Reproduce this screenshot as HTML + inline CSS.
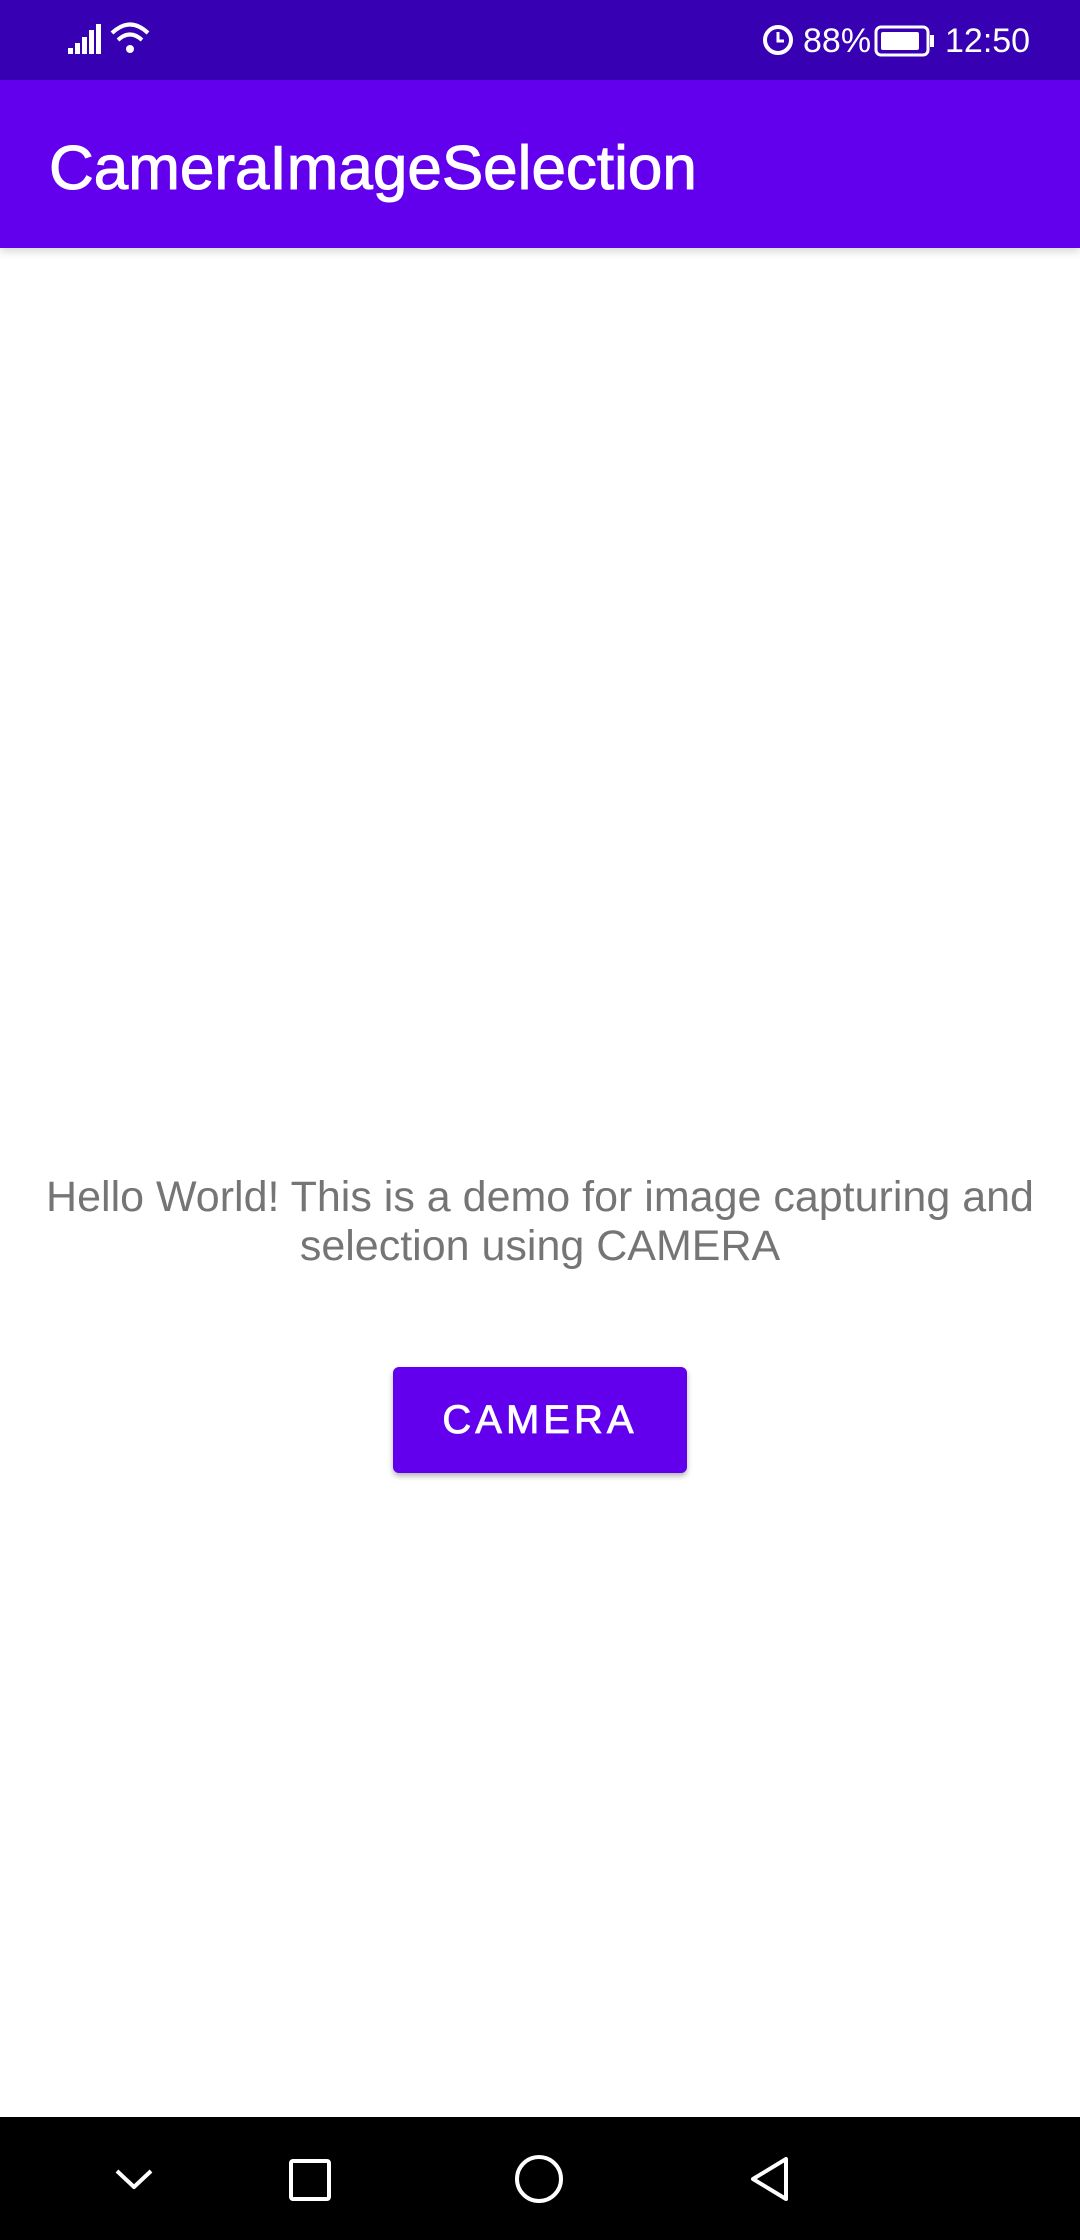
<!DOCTYPE html>
<html><head><meta charset="utf-8"><style>
html,body{margin:0;padding:0;width:1080px;height:2240px;background:#fff;overflow:hidden;font-family:"Liberation Sans",sans-serif;position:relative}
.sb{position:absolute;top:0;left:0;width:1080px;height:80px;background:#3700B3;color:#fff}
.ab{position:absolute;top:80px;left:0;width:1080px;height:168px;background:#6200EE;box-shadow:0 4px 8px rgba(0,0,0,.15)}
.ab span{position:absolute;left:49px;top:89px;color:#fff;font-size:62px;-webkit-text-stroke:1px #fff;line-height:1;transform:translateY(-50%)}
.msg{position:absolute;left:0;width:1080px;top:1173px;text-align:center;color:#757575;font-size:43px;line-height:49px}
.btn{position:absolute;left:393px;top:1367px;width:294px;height:106px;background:#6200EE;border-radius:6px;box-shadow:0 3px 6px rgba(0,0,0,.3);color:#fff;font-size:40px;-webkit-text-stroke:0.8px #fff;letter-spacing:4px;text-align:center;line-height:106px}
.nav{position:absolute;left:0;top:2117px;width:1080px;height:123px;background:#000}
</style></head><body>
<div class="sb">
<svg width="1080" height="80" style="position:absolute;left:0;top:0">
<g fill="#fff"><rect x="68" y="48" width="5" height="6"/><rect x="75" y="43" width="5" height="11"/><rect x="82" y="37" width="5" height="17"/><rect x="89" y="30" width="5" height="24"/><rect x="96" y="24" width="5" height="30"/></g>
<g fill="none" stroke="#fff" stroke-width="4"><path d="M112 33 Q130 16 148 33"/><path d="M118 40 Q130 29 142 40"/></g><circle cx="130" cy="49" r="4" fill="#fff"/>
<circle cx="778" cy="40" r="13" fill="none" stroke="#fff" stroke-width="4"/><path d="M778 32v9h6" stroke="#fff" stroke-width="3" fill="none"/>
<text x="803" y="52" fill="#fff" font-size="34" font-family="Liberation Sans">88%</text>
<rect x="876" y="27" width="52" height="28" rx="5" fill="none" stroke="#fff" stroke-width="3"/><rect x="881" y="32" width="38" height="18" rx="2" fill="#fff"/><rect x="930" y="35" width="4" height="12" fill="#fff"/>
<text x="945" y="52" fill="#fff" font-size="34" font-family="Liberation Sans">12:50</text>
</svg></div>
<div class="ab"><span>CameraImageSelection</span></div>
<div class="msg">Hello World! This is a demo for image capturing and<br>selection using CAMERA</div>
<div class="btn">CAMERA</div>
<div class="nav"><svg width="1080" height="123">
<g fill="none" stroke="#fff" stroke-width="4" stroke-linejoin="round">
<path d="M117 54 L134 70 L151 54"/>
<rect x="291" y="44" width="38" height="38" rx="2"/>
<circle cx="539" cy="62" r="22"/>
<path d="M786 42 L786 82 L753 62 Z"/>
</g></svg></div>
</body></html>
